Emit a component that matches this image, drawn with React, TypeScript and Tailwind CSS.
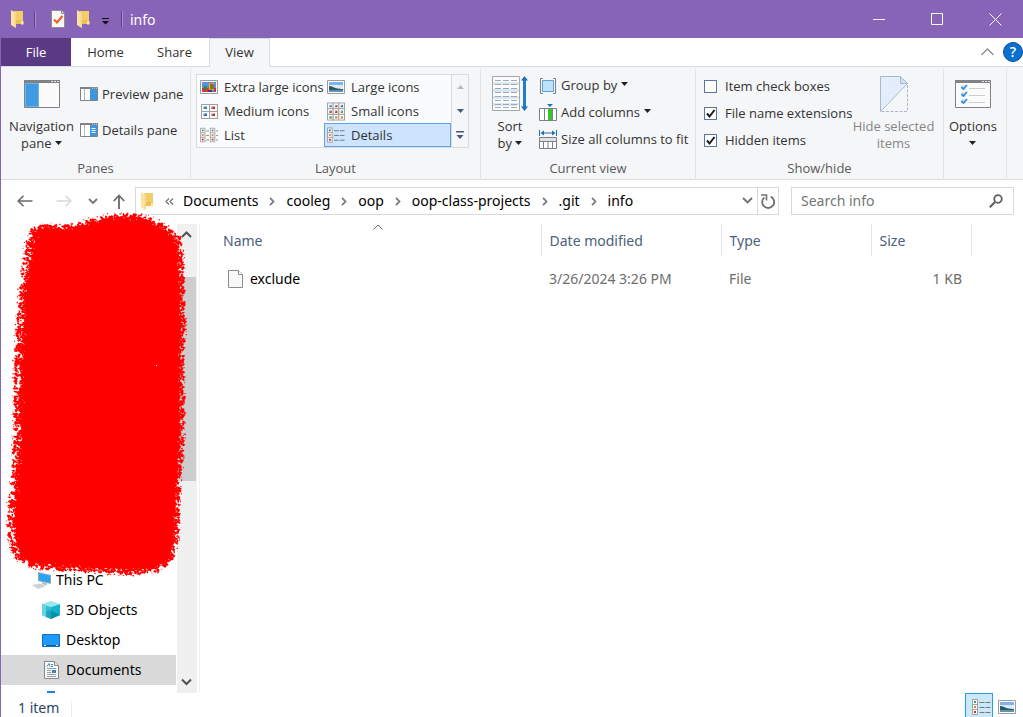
import React, { useId, useState } from "react";
import type { ReactNode } from "react";

/* ---------- small glyphs ---------- */

function Caret({ className = "text-[#222]" }: { className?: string }) {
  return (
    <svg width="7" height="4" viewBox="0 0 7 4" className={`inline-block shrink-0 ${className}`} aria-hidden="true">
      <path d="M0 0h7L3.5 4z" fill="currentColor" />
    </svg>
  );
}

function FolderIcon() {
  return (
    <svg width="13" height="18" viewBox="0 0 13 18" aria-hidden="true">
      <path d="M3 1h9v13H3z" fill="#f3cd6b" />
      <path d="M3 10h9v4H3z" fill="#edc055" />
      <path d="M0 0l5 3v15l-5-3z" fill="#fbe3a0" />
      <path d="M5 3v15l-1.500-1V2z" fill="#f6d988" />
      <path d="M10 11h2.500v3.500H10z" fill="#ffe9a8" />
    </svg>
  );
}

function PropertiesIcon() {
  return (
    <svg width="14" height="18" viewBox="0 0 14 18" aria-hidden="true">
      <path d="M.5.5h10l3 3v14H.5z" fill="#f7f7f7" stroke="#8f8f93" />
      <path d="M10.500.5v3h3" fill="#ddd" stroke="#8f8f93" />
      <path d="M3 9.500l3 3 5.500-6.500" fill="none" stroke="#e8601c" strokeWidth="2" />
    </svg>
  );
}

function WindowFrame({ children }: { children?: ReactNode }) {
  return (
    <svg width="36" height="28" viewBox="0 0 36 28" aria-hidden="true">
      <path d="M.5.5h35v27H.5z" fill="#fbfbfb" stroke="#808285" />
      <path d="M0 0h36v3H0z" fill="#808285" />
      <path d="M27 1h2v1h-2zM30 1h2v1h-2zM33 1h2v1h-2z" fill="#e6e6e6" />
      {children}
    </svg>
  );
}

function PaneIcon({ lines = false }: { lines?: boolean }) {
  return (
    <svg width="18" height="14" viewBox="0 0 18 14" aria-hidden="true">
      <path d="M.5.5h17v13H.5z" fill="#fff" stroke="#808285" />
      <path d="M0 0h18v2H0z" fill="#808285" />
      <path d="M12 .8h1v.8h-1zM14 .8h1v.8h-1zM16 .8h1v.8h-1z" fill="#eee" />
      <path d="M4 2h1v11H4z" fill="#b5b7ba" />
      <path d="M10 2h7v11h-7z" fill="#3c97df" />
      {lines && <path d="M11.500 5.500h4M11.500 7.500h4M11.500 9.500h4" stroke="#fff" />}
    </svg>
  );
}

function LandscapeIcon() {
  return (
    <svg width="18" height="14" viewBox="0 0 18 14" aria-hidden="true">
      <path d="M.5.5h17v13H.5z" fill="#fff" stroke="#9b9b9b" />
      <path d="M2 2h14v5H2z" fill="#7fb2ee" />
      <path d="M2 5h14v3H2z" fill="#d9ecf8" />
      <path d="M2 6c3 0 5 2 9 2.500L16 9v1H2z" fill="#31585a" />
      <path d="M2 10h14v2H2z" fill="#5c93b8" />
    </svg>
  );
}

function ParrotIcon() {
  return (
    <svg width="18" height="14" viewBox="0 0 18 14" aria-hidden="true">
      <path d="M.5.5h17v13H.5z" fill="#fff" stroke="#9b9b9b" />
      <path d="M2 2h14v10H2z" fill="#5a8ee8" />
      <path d="M2 8h7v4H2z" fill="#d4362b" />
      <path d="M4 6h3v4H4z" fill="#2f8d49" />
      <path d="M9 3h5v7H9z" fill="#f2b41b" />
      <path d="M10.500 3.500h1v6h-1zM12.500 4h1v5h-1z" fill="#3a2b14" />
      <path d="M14 8h2v4h-2z" fill="#c9342c" />
      <path d="M8 10h4v2H8z" fill="#533075" />
    </svg>
  );
}

const DOT_COLOURS = ["#2d7fb8", "#5c9a3a", "#c8322b", "#3d8f6c", "#3566c8", "#e08a1e", "#c8322b", "#e08a1e", "#b32a24"];

function TileIcon({ n }: { n: 2 | 3 }) {
  const width = n === 2 ? 17 : 19;
  const height = n === 2 ? 15 : 19;
  const stepX = (width - 1) / n;
  const stepY = (height - 1) / n;
  const dotW = n === 2 ? 4 : 3;
  const dotH = n === 2 ? 3 : 3;
  const cells = Array.from({ length: n * n }, (_, i) => ({ x: (i % n) * stepX, y: Math.floor(i / n) * stepY, i }));
  return (
    <svg width={width} height={height} viewBox={`0 0 ${width} ${height}`} aria-hidden="true">
      {cells.map((c) => (
        <g key={c.i}>
          <rect x={c.x + 0.5} y={c.y + 0.5} width={stepX} height={stepY} fill="#fff" stroke="#a0a0a0" />
          <rect x={c.x + 2.5} y={c.y + 2.500} width={dotW - 0.5} height={dotH - 0.5} fill={DOT_COLOURS[(c.i * 2) % 9]} />
          <rect x={c.x + 2.5} y={c.y + 2.500} width={1.5} height={1} fill="#a5dcf3" />
        </g>
      ))}
    </svg>
  );
}

function Strip({ x }: { x: number }) {
  return (
    <g>
      <path d={`M${x + 0.5} .5h5v15h-5zM${x + 0.5} 5.500h5M${x + 0.5} 10.500h5`} fill="#fff" stroke="#a0a0a0" />
      <rect x={x + 2} y="2" width="2" height="2" fill="#3c8d9c" />
      <rect x={x + 2} y="7" width="2" height="2" fill="#cf8434" />
      <rect x={x + 2} y="12" width="2" height="2" fill="#c42d24" />
    </g>
  );
}

function ListIcon() {
  return (
    <svg width="20" height="16" viewBox="0 0 20 16" aria-hidden="true">
      <Strip x={0} />
      <Strip x={11} />
      <path d="M7 3.500h3M7 8.500h3M7 13.500h3M18 3.500h2M18 8.500h2M18 13.500h2" stroke="#7d8085" />
    </svg>
  );
}

function DetailsIcon() {
  return (
    <svg width="19" height="16" viewBox="0 0 19 16" aria-hidden="true">
      <Strip x={0} />
      <path d="M7.500 3.500h5M13.500 3.500h5M7.500 8.500h5M13.500 8.500h5M7.500 13.500h5M13.500 13.500h5" stroke="#75797f" />
    </svg>
  );
}

function SortIcon() {
  return (
    <svg width="36" height="36" viewBox="0 0 36 36" aria-hidden="true">
      <path d="M.5.5h27v34H.5z" fill="#fdfdfd" stroke="#a4a6a9" />
      <path d="M1 6h26v3H1zM1 13h26v3H1zM1 20h26v3H1zM1 27h26v3H1z" fill="#d4e8f5" />
      {[4.5, 8.5, 12.5, 16.5, 20.5, 24.5, 28.5, 31.5].map((y) => (
        <path key={y} d={`M3 ${y}h6M11 ${y}h6M19 ${y}h6`} stroke="#a3a7ab" />
      ))}
      <path d="M32.500 3v29" stroke="#1f7ed0" strokeWidth="3" />
      <path d="M32.500 0l3.500 4.500h-7zM32.500 35l3.500-4.500h-7z" fill="#1f6fb8" />
    </svg>
  );
}

function GroupIcon() {
  return (
    <svg width="16" height="16" viewBox="0 0 16 16" aria-hidden="true">
      <path d="M3 .5H.5v15H3M13 .5h2.500v15H13" fill="none" stroke="#808285" />
      <path d="M2.500 2.500h11v11h-11z" fill="#bfe2fb" stroke="#5ea3dc" />
    </svg>
  );
}

function AddColumnsIcon() {
  return (
    <svg width="18" height="17" viewBox="0 0 18 17" aria-hidden="true">
      <path d="M8 0h6l-3 3z" fill="#1f6fb8" />
      <path d="M.5 4.500h17v12H.5zM5.500 4.500v12M13.500 4.500v12" fill="#fff" stroke="#7c7f83" />
      <path d="M9 5h4v11H9z" fill="#2fc92f" />
    </svg>
  );
}

function SizeColumnsIcon() {
  return (
    <svg width="18" height="19" viewBox="0 0 18 19" aria-hidden="true">
      <path d="M.5 0v6M17.500 0v6M3 3h12" stroke="#1f6fb8" fill="none" />
      <path d="M1.500 3L5 .5v5zM16.500 3L13 .5v5z" fill="#1f6fb8" />
      <path d="M.5 7.500h17v11H.5z" fill="#fff" stroke="#7c7f83" />
      <path d="M1 8h16v3H1z" fill="#e3e0e3" />
      <path d="M0 11.500h18M4.500 12v6M9 12v6M13.500 12v6" stroke="#7c7f83" />
    </svg>
  );
}

function HideIcon() {
  return (
    <svg width="28" height="36" viewBox="0 0 28 36" aria-hidden="true">
      <path d="M.5.5h20l7 7L.5 35.500z" fill="#e4eefb" stroke="#a9b8d2" />
      <path d="M20.500.5v7h7z" fill="#d0dff3" stroke="#a9b8d2" />
      <path d="M27.500 9v26.500H.5" fill="none" stroke="#a9b8d2" strokeDasharray="3 1.500" />
    </svg>
  );
}

function OptionsIcon() {
  return (
    <WindowFrame>
      {[7, 14, 21].map((y) => (
        <g key={y}>
          <path d={`M6 ${y - 2}h5v5H6z`} fill="#e1e6ea" />
          <path d={`M6.500 ${y}l2 2 3.500-4`} fill="none" stroke="#2f92df" strokeWidth="1.800" />
          <path d={`M14 ${y + 1.5}h16`} stroke="#cbcdd0" />
        </g>
      ))}
    </WindowFrame>
  );
}

function Chevron({ d, width, height, stroke, thick = 1.5 }: { d: string; width: number; height: number; stroke: string; thick?: number }) {
  return (
    <svg width={width} height={height} viewBox={`0 0 ${width} ${height}`} aria-hidden="true">
      <path d={d} fill="none" stroke={stroke} strokeWidth={thick} />
    </svg>
  );
}

/* ---------- ribbon ---------- */

function RibbonGroup({ title, className, children }: { title: string; className: string; children: ReactNode }) {
  return (
    <section aria-label={title} className={`flex shrink-0 flex-col border-r border-[#e2e3e4] ${className}`}>
      <div className="flex h-[89px]">{children}</div>
      <div className="text-center leading-5 text-[#5a5a5a]">{title}</div>
    </section>
  );
}

function BigButton({ icon, className, disabled, children }: { icon: ReactNode; className: string; disabled?: boolean; children: ReactNode }) {
  return (
    <button
      disabled={disabled}
      className={`flex shrink-0 flex-col items-center text-center leading-[17px] whitespace-nowrap disabled:text-[#868686] ${className}`}
    >
      <span className="flex h-[49px] items-center">{icon}</span>
      <span>{children}</span>
    </button>
  );
}

function RowButton({ icon, className, children }: { icon: ReactNode; className: string; children: ReactNode }) {
  return (
    <button className={`flex items-center gap-1 whitespace-nowrap ${className}`}>
      <span className="flex w-[18px] justify-center">{icon}</span>
      <span className="flex items-center gap-1">{children}</span>
    </button>
  );
}

function CheckRow({ label, initial }: { label: string; initial: boolean }) {
  const id = useId();
  const [checked, setChecked] = useState(initial);
  return (
    <div className="flex h-[27px] items-center gap-2">
      <span className="grid">
        <input
          id={id}
          type="checkbox"
          checked={checked}
          onChange={(e) => setChecked(e.target.checked)}
          className="col-start-1 row-start-1 size-[13px] appearance-none border border-[#5a76a6] bg-white"
        />
        {checked && (
          <svg width="13" height="13" viewBox="0 0 13 13" className="pointer-events-none col-start-1 row-start-1" aria-hidden="true">
            <path d="M3 6.500l2.500 3L10.500 3" fill="none" stroke="#1a1a1a" strokeWidth="2" />
          </svg>
        )}
      </span>
      <label htmlFor={id} className="whitespace-nowrap">
        {label}
      </label>
    </div>
  );
}

const VIEWS: { label: string; icon: ReactNode }[] = [
  { label: "Extra large icons", icon: <ParrotIcon /> },
  { label: "Large icons", icon: <LandscapeIcon /> },
  { label: "Medium icons", icon: <TileIcon n={2} /> },
  { label: "Small icons", icon: <TileIcon n={3} /> },
  { label: "List", icon: <ListIcon /> },
  { label: "Details", icon: <DetailsIcon /> },
];

function Ribbon() {
  const [view, setView] = useState("Details");
  return (
    <div className="flex h-[113px] shrink-0 overflow-hidden border-b border-[#dadbdc] bg-[#f5f6f7] pt-0.5 pb-px font-['Open_Sans','Noto_Sans',sans-serif] text-[13px] text-[#333]">
      <RibbonGroup title="Panes" className="w-[190px]">
        <BigButton
          className="w-[79px] pl-0.5"
          icon={
            <WindowFrame>
              <path d="M1 3h14v24H1z" fill="#419be2" />
              <path d="M1.500 3.500h13v23h-13z" fill="none" stroke="#6cb4ea" />
            </WindowFrame>
          }
        >
          Navigation
          <br />
          pane <Caret className="mb-1 align-middle text-[#222]" />
        </BigButton>
        <div className="flex flex-col pt-[7px]">
          <RowButton className="h-9" icon={<PaneIcon />}>
            Preview pane
          </RowButton>
          <RowButton className="h-9" icon={<PaneIcon lines />}>
            Details pane
          </RowButton>
        </div>
      </RibbonGroup>

      <RibbonGroup title="Layout" className="w-[290px] px-[5px]">
        <div className="mt-[5px] flex h-[74px] border border-[#dadbdc] bg-[#fafbfc]">
          <div className="grid grid-cols-[127px_127px] grid-rows-3">
            {VIEWS.map((v) => (
              <button
                key={v.label}
                onClick={() => setView(v.label)}
                aria-pressed={view === v.label}
                className={`flex h-6 items-center gap-1.5 border pl-0.5 whitespace-nowrap ${
                  view === v.label ? "border-[#62a2e4] bg-[#cce4fd]" : "border-transparent"
                }`}
              >
                <span className="flex w-[18px] justify-center">{v.icon}</span>
                {v.label}
              </button>
            ))}
          </div>
          <div className="flex w-[17px] flex-col border-l border-[#dadbdc] bg-[#f5f6f7]">
            <button aria-label="Scroll views up" className="flex h-6 items-center justify-center">
              <svg width="7" height="4" viewBox="0 0 7 4" aria-hidden="true">
                <path d="M0 4h7L3.500 0z" fill="#b4bac2" />
              </svg>
            </button>
            <button aria-label="Scroll views down" className="flex h-6 items-center justify-center">
              <Caret className="text-[#46597b]" />
            </button>
            <button aria-label="More views" className="flex h-6 items-center justify-center">
              <svg width="8" height="8" viewBox="0 0 8 8" aria-hidden="true">
                <path d="M0 0h8v1.500H0zM.5 4h7L4 8z" fill="#46597b" />
              </svg>
            </button>
          </div>
        </div>
      </RibbonGroup>

      <RibbonGroup title="Current view" className="w-[215px]">
        <BigButton className="w-[58px]" icon={<SortIcon />}>
          Sort
          <br />
          by <Caret className="mb-1 align-middle text-[#222]" />
        </BigButton>
        <div className="flex flex-col pt-[3px]">
          <RowButton className="h-[27px]" icon={<GroupIcon />}>
            Group by <Caret className="mb-1 text-[#222]" />
          </RowButton>
          <RowButton className="h-[27px]" icon={<AddColumnsIcon />}>
            Add columns <Caret className="mb-1 text-[#222]" />
          </RowButton>
          <RowButton className="h-[27px]" icon={<SizeColumnsIcon />}>
            Size all columns to fit
          </RowButton>
        </div>
      </RibbonGroup>

      <RibbonGroup title="Show/hide" className="w-[248px]">
        <div className="flex w-[154px] flex-col pt-1 pl-2">
          <CheckRow label="Item check boxes" initial={false} />
          <CheckRow label="File name extensions" initial />
          <CheckRow label="Hidden items" initial />
        </div>
        <BigButton className="w-[87px]" disabled icon={<HideIcon />}>
          Hide selected
          <br />
          items
        </BigButton>
      </RibbonGroup>

      <div className="flex w-[63px] shrink-0 flex-col border-r border-[#e2e3e4]">
        <BigButton className="w-[58px]" icon={<OptionsIcon />}>
          Options
          <br />
          <Caret className="mb-1 align-middle text-[#222]" />
        </BigButton>
      </div>
    </div>
  );
}

/* ---------- sidebar ---------- */

const OUTLINE: [number, number][] = [
  [30, 228], [45, 224], [70, 225], [90, 219], [115, 214], [137, 214], [155, 219], [167, 227], [180, 238],
  [183, 260], [184, 300], [185, 330], [183, 360], [184, 400], [183, 440], [181, 470], [179, 500], [178, 540],
  [172, 560], [158, 571], [130, 574], [90, 572], [60, 570], [30, 567], [14, 557], [8, 535], [8, 505],
  [12, 470], [14, 420], [14, 380], [15, 340], [18, 300], [22, 270], [25, 245],
];

function buildBrush() {
  let seed = 7;
  const rand = () => {
    seed = (seed * 16807) % 2147483647;
    return seed / 2147483647;
  };
  const edge: string[] = [];
  const dots: string[] = [];
  const holes: string[] = [];
  OUTLINE.forEach(([x1, y1], i) => {
    const [x2, y2] = OUTLINE[(i + 1) % OUTLINE.length];
    const len = Math.hypot(x2 - x1, y2 - y1);
    const nx = -(y2 - y1) / len;
    const ny = (x2 - x1) / len;
    const depth = nx > 0.7 ? 9 : 5;
    const blob = (t: number, inset: number, size: number) => {
      const x = x1 + (x2 - x1) * t + nx * inset;
      const y = y1 + (y2 - y1) * t + ny * inset;
      const w = size * (0.6 + rand() * 0.8);
      const h = size * (0.6 + rand() * 0.8);
      return `M${x.toFixed(1)} ${(y - h / 2).toFixed(1)}l${w.toFixed(1)} ${(h / 2).toFixed(1)}l${(-w * 0.6).toFixed(1)} ${h.toFixed(1)}l${(-w).toFixed(1)} ${(-h * 0.8).toFixed(1)}z`;
    };
    const steps = Math.max(2, Math.round(len / 1.5));
    for (let s = 0; s < steps; s++) {
      const t = s / steps;
      const inset = depth * (0.35 + rand() * 0.65);
      edge.push(`${(x1 + (x2 - x1) * t + nx * inset).toFixed(1)},${(y1 + (y2 - y1) * t + ny * inset).toFixed(1)}`);
      for (let k = 0; k < depth / 3; k++) dots.push(blob(rand(), rand() * depth, 1.9));
      if (rand() < 0.35) dots.push(blob(rand(), -rand() * 2, 0.9));
      if (rand() < 0.3) holes.push(blob(rand(), depth * (0.4 + rand() * 0.8), 0.7));
    }
  });
  return { edge: edge.join(" "), dots: dots.join(""), holes: holes.join("") };
}

const BRUSH = buildBrush();

function BrushStroke() {
  return (
    <svg
      width="199"
      height="372"
      viewBox="1 208 199 372"
      className="pointer-events-none absolute -top-4 left-0 z-10"
      aria-hidden="true"
    >
      <polygon points={BRUSH.edge} fill="#f00" />
      <path d={BRUSH.dots} fill="#f00" />
      <path d={BRUSH.holes} fill="#ffd9d9" />
      <rect x="156" y="365" width="1" height="1" fill="#fff" />
    </svg>
  );
}

function ThisPcIcon() {
  return (
    <svg width="20" height="17" viewBox="0 0 20 17" aria-hidden="true">
      <path d="M6 0l13 3v9L6 9z" fill="#8fa6b8" />
      <path d="M7 1.200l11 2.600v7L7 8.200z" fill="#2aa3f3" />
      <path d="M10 10l5 1.200v2l-5-1z" fill="#b8c0c6" />
      <path d="M0 13l8-1.500 6 2.500-8 3z" fill="#ccd2d6" />
    </svg>
  );
}

function CubeIcon() {
  return (
    <svg width="18" height="18" viewBox="0 0 18 18" aria-hidden="true">
      <path d="M9 0l9 3-9 3-9-3z" fill="#9be6ee" />
      <path d="M0 3l9 3v12l-9-4z" fill="#37bccb" />
      <path d="M18 3L9 6v12l9-4z" fill="#12b4d2" />
      <path d="M0 3l4 1.300V16L0 14z" fill="#66d3de" />
      <path d="M9 10l4.500 1.500 4.500 2.500-9 4z" fill="#0c8fa8" />
      <path d="M4 10l5-1v9l-5-2z" fill="#1ba8ba" />
    </svg>
  );
}

function DesktopIcon() {
  return (
    <svg width="18" height="13" viewBox="0 0 18 13" aria-hidden="true">
      <path d="M.5.5h17v12H.5z" fill="#1e9bfa" stroke="#1170bd" />
      <path d="M1 11h16v1H1z" fill="#0d5c9e" />
      <path d="M2 11h2v1H2zM14 11h2v1h-2z" fill="#d9efff" />
    </svg>
  );
}

function DocumentsIcon() {
  return (
    <svg width="15" height="18" viewBox="0 0 15 18" aria-hidden="true">
      <path d="M.5.5h10l4 4v13H.5z" fill="#fcfcfc" stroke="#85888b" />
      <path d="M10.500.5v4h4" fill="#e4e4e4" stroke="#85888b" />
      <path d="M3 5.500l2-3 1 3M7 3.500h2M7 5.500h2" stroke="#2d8ad0" fill="none" />
      <path d="M3 7.500h9M3 9.500h4M3 11.500h4M3 13.500h9M3 15.500h9" stroke="#9a9da0" />
      <path d="M8 9h4v3H8z" fill="#3a7fb5" />
    </svg>
  );
}

const TREE: { label: string; icon: ReactNode; indent: string }[] = [
  { label: "This PC", icon: <ThisPcIcon />, indent: "pl-[31px] gap-1" },
  { label: "3D Objects", icon: <CubeIcon />, indent: "pl-[41px] gap-1.5" },
  { label: "Desktop", icon: <DesktopIcon />, indent: "pl-[41px] gap-1.5" },
  { label: "Documents", icon: <DocumentsIcon />, indent: "pl-[41px] gap-1.5" },
];

function Sidebar() {
  return (
    <aside className="relative flex shrink-0 border-r border-[#f2f2f2] pr-0.5">
      <nav aria-label="Folders" className="flex w-[175px] flex-col overflow-hidden pt-[341px]">
        {TREE.map((item) => (
          <a
            key={item.label}
            href="#"
            aria-current={item.label === "Documents" ? "page" : undefined}
            className={`flex h-[30px] shrink-0 items-center whitespace-nowrap ${item.indent} aria-[current=page]:bg-[#d9d9d9]`}
          >
            <span className="flex min-w-[18px] justify-center">{item.icon}</span>
            {item.label}
          </a>
        ))}
        <span className="mt-[6px] ml-[46px] h-1 w-2 shrink-0 bg-[#1c84dc]" />
      </nav>
      <div className="ml-px flex w-5 flex-col bg-[#f0f0f0] pr-px">
        <button aria-label="Scroll up" className="flex h-[22px] items-center justify-center">
          <Chevron d="M1 6l4.500-4.500L10 6" width={11} height={8} stroke="#505050" thick={2} />
        </button>
        <div className="mt-[31px] h-[204px] bg-[#cdcdcd]" />
        <button aria-label="Scroll down" className="mt-auto flex h-[22px] items-center justify-center">
          <Chevron d="M1 1.500L5.500 6 10 1.500" width={11} height={8} stroke="#505050" thick={2} />
        </button>
      </div>
      <BrushStroke />
    </aside>
  );
}

/* ---------- page ---------- */

const CRUMBS = ["Documents", "cooleg", "oop", "oop-class-projects", ".git", "info"];

export default function App() {
  return (
    <div className="flex h-screen flex-col overflow-hidden bg-white font-['Noto_Sans','Open_Sans',sans-serif] text-sm text-black">
      <header className="flex h-[38px] shrink-0 items-center bg-[#8764b8] pl-[11px] text-white">
        <FolderIcon />
        <span className="ml-2.5 h-4 w-0.5 border-x border-[#5f4486] border-r-[#a98fce]" />
        <button aria-label="Properties" className="ml-[15px]">
          <PropertiesIcon />
        </button>
        <button aria-label="New folder" className="ml-3">
          <FolderIcon />
        </button>
        <button aria-label="Customize Quick Access Toolbar" className="ml-3 pt-1">
          <svg width="7" height="7" viewBox="0 0 7 7" aria-hidden="true">
            <path d="M0 0h7v1H0zM0 3h7L3.500 6.500z" fill="#111" />
          </svg>
        </button>
        <span className="ml-3 h-4 w-0.5 border-x border-[#5f4486] border-r-[#a98fce]" />
        <h1 className="ml-[7px] flex-1 pt-0.5 text-sm">info</h1>
        <div className="-mr-px flex h-full">
          <button aria-label="Minimize" className="flex h-full w-[58px] items-center justify-center">
            <Chevron d="M0 .5h12" width={12} height={1} stroke="#fff" thick={1} />
          </button>
          <button aria-label="Maximize" className="flex h-full w-[58px] items-center justify-center">
            <Chevron d="M.5.5h11v11H.5z" width={12} height={12} stroke="#fff" thick={1} />
          </button>
          <button aria-label="Close" className="flex h-full w-[58px] items-center justify-center">
            <Chevron d="M.5.5l12 12M12.500.5l-12 12" width={13} height={13} stroke="#fff" thick={1} />
          </button>
        </div>
      </header>

      <div className="flex min-h-0 flex-1 flex-col border-l border-[#8764b8]">
        <div className="flex h-[29px] shrink-0 border-b border-[#dadbdc] font-['Open_Sans','Noto_Sans',sans-serif] text-[13px] text-[#333]">
          <button className="h-7 w-[70px] bg-[#5b3a85] text-white">File</button>
          <button className="h-7 w-[69px]">Home</button>
          <button className="h-7 w-[69px]">Share</button>
          <button className="-mb-px h-[29px] w-[61px] border-x border-t border-[#dadbdc] bg-[#f5f6f7] pb-0.5">View</button>
          <div className="flex h-7 flex-1 items-center justify-end gap-[9px]">
            <button aria-label="Collapse ribbon">
              <Chevron d="M.5 7L6.500 1l6 6" width={13} height={8} stroke="#8c8c8c" thick={1.3} />
            </button>
            <button
              aria-label="Help"
              className="size-5 rounded-full border border-[#0a4f94] bg-[#0b6fd0] text-sm leading-[18px] font-semibold text-white"
            >
              ?
            </button>
          </div>
        </div>

        <Ribbon />

        <div className="flex h-11 shrink-0 items-center pr-[9px] pb-0.5 pl-4">
          <button aria-label="Back">
            <Chevron d="M15.500 6H1M6.500.8L1.200 6l5.300 5.200" width={16} height={12} stroke="#6a6a6a" thick={1.6} />
          </button>
          <button aria-label="Forward" disabled className="ml-[23px]">
            <Chevron d="M.5 6H15M9.500.8L14.800 6l-5.300 5.200" width={16} height={12} stroke="#d8d8d8" thick={1.6} />
          </button>
          <button aria-label="Recent locations" className="ml-4">
            <Chevron d="M1 1l4 4 4-4" width={10} height={7} stroke="#757575" thick={1.8} />
          </button>
          <button aria-label="Up" className="ml-[15px]">
            <Chevron d="M6 15V1.500M.8 7L6 1.500 11.200 7" width={12} height={15} stroke="#6a6a6a" thick={1.8} />
          </button>
          <div className="ml-[10px] flex h-7 min-w-0 flex-1 items-center border border-[#d9d9d9] pl-[5px]">
            <FolderIcon />
            <span className="ml-[11px]">
              <Chevron d="M4 .5L1 3.500l3 3M8 .5l-3 3 3 3" width={9} height={7} stroke="#707070" thick={1.2} />
            </span>
            <nav aria-label="Address" className="ml-[9px] flex flex-1 items-center whitespace-nowrap">
              {CRUMBS.map((crumb, i) => (
                <React.Fragment key={crumb}>
                  {i > 0 && (
                    <span className="flex w-7 justify-center">
                      <Chevron d="M1 .8l3.500 3.700L1 8.200" width={6} height={9} stroke="#7a7a7a" thick={1.8} />
                    </span>
                  )}
                  <a href="#">{crumb}</a>
                </React.Fragment>
              ))}
            </nav>
            <button aria-label="Previous locations" className="flex h-full w-5 items-center justify-center">
              <Chevron d="M1 1l4.500 4.500L10 1" width={11} height={8} stroke="#6f6f6f" thick={1.8} />
            </button>
            <button aria-label="Refresh" className="flex h-full w-[21px] items-center justify-center border-l border-[#d9d9d9]">
              <svg width="14" height="15" viewBox="0 0 14 15" aria-hidden="true">
                <path d="M3.300 3.400A6 6 0 1 0 9.800 2.600" fill="none" stroke="#707070" strokeWidth="1.800" />
                <path d="M0 1h5.500v5.500" fill="none" stroke="#707070" strokeWidth="1.600" />
              </svg>
            </button>
          </div>
          <label className="ml-3 flex h-7 w-[223px] items-center border border-[#d9d9d9] pr-2.5 pl-[9px]">
            <input
              type="text"
              aria-label="Search info"
              placeholder="Search info"
              className="min-w-0 flex-1 bg-transparent outline-none placeholder:text-[#757575]"
            />
            <svg width="14" height="14" viewBox="0 0 14 14" aria-hidden="true">
              <circle cx="9" cy="5" r="3.800" fill="none" stroke="#606060" strokeWidth="1.800" />
              <path d="M6 8L.8 13.200" stroke="#606060" strokeWidth="2.200" />
            </svg>
          </label>
        </div>

        <div className="flex min-h-0 flex-1">
          <Sidebar />
          <main className="min-w-0 flex-1">
            <table className="w-full table-fixed text-left">
              <colgroup>
                <col className="w-[341px]" />
                <col className="w-[180px]" />
                <col className="w-[150px]" />
                <col className="w-[100px]" />
                <col />
              </colgroup>
              <thead>
                <tr className="h-8 text-[#4c607a]">
                  <th className="relative pt-0.5 pl-[23px] font-normal">
                    Name
                    <span className="absolute top-0 left-[173px]">
                      <Chevron d="M.5 5.500L5 1l4.500 4.500" width={10} height={6} stroke="#6a6a6a" thick={1} />
                    </span>
                  </th>
                  <th className="border-l border-[#e5e5e5] pt-0.5 pl-2 font-normal">Date modified</th>
                  <th className="border-l border-[#e5e5e5] pt-0.5 pl-2 font-normal">Type</th>
                  <th className="border-x border-[#e5e5e5] pt-0.5 pl-2 font-normal">Size</th>
                  <th aria-hidden="true" />
                </tr>
              </thead>
              <tbody>
                <tr className="h-[46px] text-[#6d6d6d]">
                  <td className="pl-7 text-black">
                    <span className="flex items-center gap-[7px]">
                      <svg width="15" height="18" viewBox="0 0 15 18" aria-hidden="true">
                        <path d="M.5.5h10l4 4v13H.5z" fill="#f8f8f8" stroke="#8c8c8c" />
                        <path d="M10.500.5v4h4" fill="#fff" stroke="#8c8c8c" />
                      </svg>
                      exclude
                    </span>
                  </td>
                  <td className="pl-2">3/26/2024 3:26 PM</td>
                  <td className="pl-2">File</td>
                  <td className="pr-[9px] text-right">1 KB</td>
                  <td />
                </tr>
              </tbody>
            </table>
          </main>
        </div>

        <footer className="flex h-6 shrink-0 items-start overflow-hidden pr-[7px] pl-[17px] text-[#2b4468]">
          <span className="pt-[5px]">1 item</span>
          <span className="mt-2 ml-3 h-4 w-px bg-[#ececec]" />
          <button
            aria-label="Details view"
            aria-pressed="true"
            className="ml-auto flex h-7 w-7 shrink-0 items-center justify-center border border-[#26a0da] bg-[#cbe8f6] pl-1"
          >
            <DetailsIcon />
          </button>
          <button aria-label="Large icons view" className="flex h-7 shrink-0 items-center pl-[5px]">
            <LandscapeIcon />
          </button>
        </footer>
      </div>
    </div>
  );
}
